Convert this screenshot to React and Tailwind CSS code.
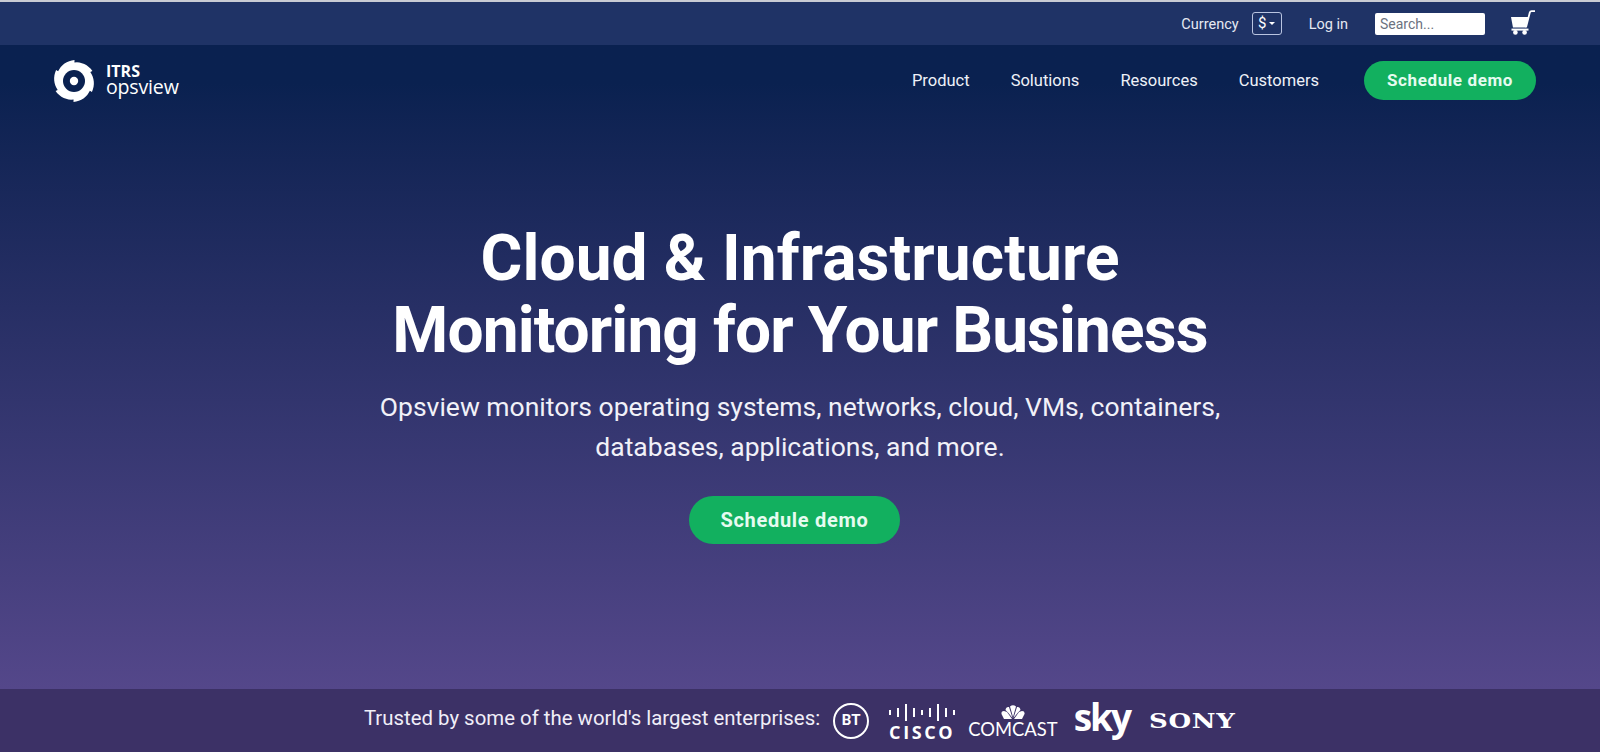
const NAV_LINKS = ['Product', 'Solutions', 'Resources', 'Customers'];

// ratchet outline: each tooth climbs from r 18.6 to r 21, then steps back
const ratchetPoints = () => {
  const pts = [];
  for (let t = 0; t < 6; t++) {
    for (let s = 0; s <= 8; s++) {
      const a = ((t + s / 8) * Math.PI) / 3 - 0.5;
      const r = 18.6 + (2.4 * s) / 8;
      pts.push(`${(21 + r * Math.cos(a)).toFixed(2)},${(21 + r * Math.sin(a)).toFixed(2)}`);
    }
  }
  return pts.join(' ');
};

const OpsviewMark = () => (
  <svg width="42" height="42" viewBox="0 0 42 42" fill="none">
    <polygon points={ratchetPoints()} fill="#fff" />
    <circle cx="21" cy="21" r="11" fill="#0a2150" />
    <circle cx="21" cy="21" r="4.2" fill="#fff" />
  </svg>
);

const CartIcon = () => (
  <svg width="24" height="25" viewBox="0 0 24 25" fill="#fff">
    <path d="M0 7 H17.4 L15 17.4 H2 Z" />
    <path d="M15 17.4 L18.8 2.6 Q19.2 1.2 20.6 1.2 H24" fill="none" stroke="#fff" strokeWidth="1.8" />
    <rect x="0.5" y="18.6" width="17" height="2" />
    <circle cx="4.4" cy="22.4" r="2.3" />
    <circle cx="13.6" cy="22.4" r="2.3" />
  </svg>
);

const CiscoLogo = () => {
  const bars = [5, 9, 17, 9, 5, 9, 17, 9, 5];
  return (
    <div className="flex flex-col items-center mt-[3px]">
      <div className="flex items-center gap-[6px] h-[19px]">
        {bars.map((h, i) => (
          <span key={i} className="w-[2px] bg-white" style={{ height: h }} />
        ))}
      </div>
      <span className="text-[18px] leading-[20px] font-bold tracking-[2.6px] text-white font-['Open_Sans',sans-serif]">
        CISCO
      </span>
    </div>
  );
};

const ComcastLogo = () => (
  <div className="flex flex-col items-center mt-[1px]">
    <svg width="24" height="15" viewBox="0 0 24 15" fill="#fff">
      <path d="M3 14 L0.5 9 Q0 6 3 6 L6 7 L11 14 Z" />
      <path d="M21 14 L23.5 9 Q24 6 21 6 L18 7 L13 14 Z" />
      <path d="M4.5 5 Q5 1.5 8 2 L11.5 13 L7 7.5 Z" />
      <path d="M19.5 5 Q19 1.5 16 2 L12.5 13 L17 7.5 Z" />
      <path d="M9 1.5 Q12 -1 15 1.5 L12 12 Z" />
    </svg>
    <span className="text-[18.4px] leading-[18px] text-white font-['Lato',sans-serif]">
      COMCAST
    </span>
  </div>
);

const ScheduleButton = ({ className }) => (
  <button
    className={`flex items-center justify-center rounded-full bg-[#12b05f] font-bold text-[#e6fbf0] font-['Roboto',sans-serif] ${className}`}
  >
    Schedule demo
  </button>
);

export default function App() {
  return (
    <div className="flex flex-col h-[752px] overflow-hidden font-['Roboto',sans-serif] text-white">
      {/* Top utility bar */}
      <div className="h-[45px] shrink-0 border-t-2 border-[#c9ccd4] bg-[#1f3366] flex items-center justify-end pr-[65px] text-[14.5px]">
        <span className="pt-[2px] text-[#e6e9f2]">Currency</span>
        <div className="ml-[13px] w-[30px] h-[23px] rounded-[3px] border border-[#b9c4e0] flex items-center justify-center gap-[3px] text-[15px]">
          $
          <span className="border-x-[3px] border-x-transparent border-t-[3px] border-t-white" />
        </div>
        <span className="ml-[27px] pt-[2px] text-[#e6e9f2]">Log in</span>
        <div className="ml-[27px] w-[110px] h-[22px] rounded-[2px] bg-white px-[5px] text-[14px] leading-[22px] text-[#6b7280]">
          Search...
        </div>
        <div className="ml-[26px] mb-[2px]">
          <CartIcon />
        </div>
      </div>

      {/* Hero, nav sits on the gradient */}
      <div className="flex-1 flex flex-col bg-linear-to-b from-[#0a2150] from-[6%] to-[#54478a]">
        <nav className="flex items-center justify-between h-[71px] pl-[53px] pr-[64px]">
          <div className="flex items-center gap-[11px]">
            <OpsviewMark />
            <div className="flex flex-col font-['Open_Sans',sans-serif]">
              <span className="text-[16px] leading-[15px] font-bold">ITRS</span>
              <span className="mb-[2px] text-[19.6px] leading-[16px] tracking-[-0.2px]">opsview</span>
            </div>
          </div>
          <div className="flex items-center">
            {NAV_LINKS.map((link) => (
              <a key={link} className="mr-[41px] pt-[2px] text-[16.5px] text-[#eef1f8]">
                {link}
              </a>
            ))}
            <ScheduleButton className="ml-[4px] w-[172px] h-[39px] text-[17px] tracking-[0.6px]" />
          </div>
        </nav>

        <div className="flex flex-col items-center mt-[107px] text-center">
          <h1 className="text-[64px] leading-[72px] font-bold">
            <span className="tracking-[0.1px]">Cloud &amp; Infrastructure</span>
            <br />
            <span className="tracking-[-0.9px]">Monitoring for Your Business</span>
          </h1>
          <p className="mt-[20px] text-[26.5px] leading-[40px] text-[#f1f1f8]">
            Opsview monitors operating systems, networks, cloud, VMs, containers,
            <br />
            databases, applications, and more.
          </p>
          <ScheduleButton className="mt-[29px] mr-[11px] w-[211px] h-[48px] text-[20px] tracking-[0.7px]" />
        </div>
      </div>

      {/* Trusted by strip */}
      <div className="h-[63px] shrink-0 bg-[#3c3166] flex items-center justify-center">
        <span className="mb-[5px] text-[20.4px] text-[#f0eef8]">
          Trusted by some of the world's largest enterprises:
        </span>
        <div className="ml-[13px] w-[36px] h-[36px] rounded-full border-2 border-white flex items-center justify-center text-[15px] font-bold">
          BT
        </div>
        <div className="ml-[20px]">
          <CiscoLogo />
        </div>
        <div className="ml-[13px]">
          <ComcastLogo />
        </div>
        <span className="ml-[16px] mb-[7px] text-[37px] leading-[38px] font-bold tracking-[-2px] font-['Open_Sans',sans-serif]">
          sky
        </span>
        <span className="ml-[19px] w-[87px] origin-left scale-x-[1.3] text-[20px] font-bold tracking-[0.5px] font-['DejaVu_Serif',serif]">
          SONY
        </span>
      </div>
    </div>
  );
}
